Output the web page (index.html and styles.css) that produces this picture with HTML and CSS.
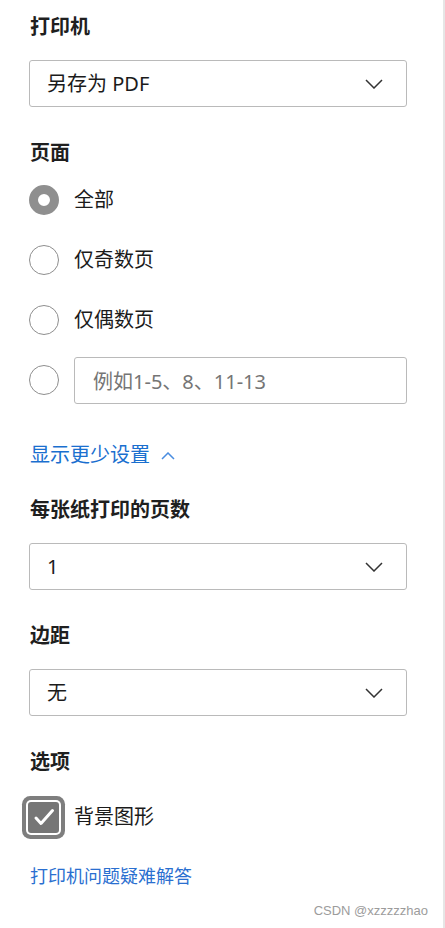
FILE: index.html
```html
<!DOCTYPE html>
<html lang="zh-CN">
<head>
<meta charset="utf-8">
<title>打印</title>
<link rel="stylesheet" href="styles.css">
</head>
<body>
<div class="panel">
  <section class="group">
    <h2 class="label">打印机</h2>
    <div class="select">
      <span class="select-text">另存为 PDF</span>
      <svg class="chev" width="18" height="10" viewBox="0 0 18 10"><path d="M1 1 L9 9 L17 1" fill="none" stroke="#333" stroke-width="1.5"/></svg>
    </div>
  </section>

  <section class="group">
    <h2 class="label label-tight">页面</h2>
    <div class="radios">
      <div class="radio-row"><span class="radio checked"></span><span class="opt">全部</span></div>
      <div class="radio-row"><span class="radio"></span><span class="opt">仅奇数页</span></div>
      <div class="radio-row"><span class="radio"></span><span class="opt">仅偶数页</span></div>
      <div class="radio-row"><span class="radio"></span><div class="text-input">例如1-5、8、11-13</div></div>
    </div>
  </section>

  <a class="toggle">显示更少设置<svg class="chev-up" width="14" height="8" viewBox="0 0 14 8"><path d="M1 7 L7 1 L13 7" fill="none" stroke="#4a8de0" stroke-width="1.5"/></svg></a>

  <section class="group">
    <h2 class="label">每张纸打印的页数</h2>
    <div class="select">
      <span class="select-text">1</span>
      <svg class="chev" width="18" height="10" viewBox="0 0 18 10"><path d="M1 1 L9 9 L17 1" fill="none" stroke="#333" stroke-width="1.5"/></svg>
    </div>
  </section>

  <section class="group">
    <h2 class="label">边距</h2>
    <div class="select">
      <span class="select-text">无</span>
      <svg class="chev" width="18" height="10" viewBox="0 0 18 10"><path d="M1 1 L9 9 L17 1" fill="none" stroke="#333" stroke-width="1.5"/></svg>
    </div>
  </section>

  <section class="group group-last">
    <h2 class="label label-opt">选项</h2>
    <div class="check-row">
      <span class="checkbox"><svg width="30" height="30" viewBox="0 0 30 30"><path d="M7 16 L12 21.5 L23.5 8.5" fill="none" stroke="#fff" stroke-width="3" stroke-linecap="round" stroke-linejoin="round"/></svg></span>
      <span class="opt">背景图形</span>
    </div>
  </section>

  <a class="help">打印机问题疑难解答</a>

  <div class="watermark">CSDN @xzzzzzhao</div>
</div>
</body>
</html>
```

FILE: styles.css
```css
* { box-sizing: border-box; }
html, body { margin: 0; padding: 0; background: #fff; }
body {
  font-family: "Noto Sans", "Noto Sans CJK SC", sans-serif;
  color: #1b1b1b;
}
.panel {
  position: relative;
  width: 445px;
  min-height: 928px;
  padding: 13px 36px 0 29px;
  border-right: 2px solid #e6e6e6;
}
.group { margin: 0 0 32px; }
.group-last { margin-bottom: 0; }
.label {
  margin: 0 0 19px;
  padding-left: 1px;
  font-size: 20px;
  line-height: 28px;
  font-weight: 700;
  color: #1f1f1f;
}
.label-tight { margin-bottom: 9px; }
.label-opt { margin-bottom: 17px; }
.select {
  height: 47px;
  border: 1px solid #bababa;
  border-radius: 3px;
  display: flex;
  align-items: center;
  justify-content: space-between;
  padding: 0 23px 0 17px;
}
.select-text { font-size: 20px; line-height: 28px; }
.chev { display: block; }
.radios {
  display: flex;
  flex-direction: column;
  gap: 12px;
}
.radio-row {
  height: 48px;
  display: flex;
  align-items: center;
  gap: 15px;
}
.radio {
  flex: none;
  width: 30px;
  height: 30px;
  border-radius: 50%;
  border: 1px solid #8e8e8e;
  background: #fff;
}
.radio.checked { border: 9px solid #8f8f8f; }
.opt { font-size: 20px; line-height: 28px; }
.text-input {
  flex: 1;
  height: 47px;
  border: 1px solid #bababa;
  border-radius: 3px;
  display: flex;
  align-items: center;
  padding-left: 18px;
  font-size: 20px;
  color: #757575;
}
.toggle {
  display: flex;
  align-items: center;
  gap: 11px;
  margin: 37px 0 27px;
  padding-left: 1px;
  font-size: 20px;
  line-height: 28px;
  color: #1a6fcf;
}
.chev-up { display: block; margin-top: 2px; }
.check-row {
  height: 48px;
  display: flex;
  align-items: center;
  gap: 15px;
}
.checkbox {
  flex: none;
  width: 31px;
  height: 31px;
  margin-left: -1px;
  border-radius: 3px;
  background: #767676;
  box-shadow: 0 0 0 2px #fff, 0 0 0 6px #7e7e7e;
  display: flex;
  align-items: center;
  justify-content: center;
}
.checkbox svg { display: block; }
.help {
  display: block;
  margin-top: 22px;
  padding-left: 1px;
  font-size: 18px;
  line-height: 26px;
  color: #2a6fd0;
}
.watermark {
  position: absolute;
  right: 15px;
  bottom: 9px;
  font-family: "Liberation Sans", Arial, sans-serif;
  font-size: 13px;
  line-height: 16px;
  color: #9c9c9c;
}
```
